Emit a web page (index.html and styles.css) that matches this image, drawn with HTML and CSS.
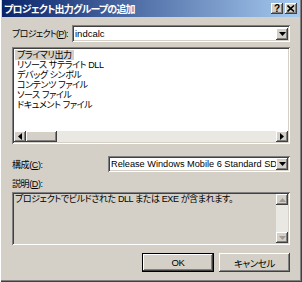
FILE: index.html
```html
<!DOCTYPE html>
<html lang="ja">
<head>
    <meta charset="UTF-8">
    <title>プロジェクト出力グループの追加</title>
    <link rel="stylesheet" href="styles.css">
</head>
<body>

<div class="dialog">
    <div class="titlebar">
        <span class="title">プロジェクト出力グループの追加</span>
        <div class="caption-buttons">
            <span class="cap-btn help">?</span>
            <span class="cap-btn">
                <svg width="8" height="7" viewBox="0 0 8 7"><path d="M0.5 0.5 L7 6.5 M7 0.5 L0.5 6.5" stroke="#000" stroke-width="1.6"/></svg>
            </span>
        </div>
    </div>

    <div class="content">
        <div class="row project-row">
            <span class="label project-label">プロジェクト(<u>P</u>):</span>
            <div class="combo">
                <span class="combo-text">indcalc</span>
                <span class="drop-btn"><svg width="7" height="4" viewBox="0 0 7 4"><path d="M0 0 H7 L3.5 4 Z" fill="#000"/></svg></span>
            </div>
        </div>

        <div class="listbox">
            <ul class="items">
                <li class="selected">プライマリ出力</li>
                <li>リソース サテライト DLL</li>
                <li>デバッグ シンボル</li>
                <li>コンテンツ ファイル</li>
                <li>ソース ファイル</li>
                <li>ドキュメント ファイル</li>
            </ul>
            <div class="hscroll">
                <span class="sb-btn"><svg width="4" height="7" viewBox="0 0 4 7"><path d="M4 0 V7 L0 3.5 Z" fill="#000"/></svg></span>
                <span class="sb-thumb"></span>
                <span class="sb-track"></span>
                <span class="sb-btn"><svg width="4" height="7" viewBox="0 0 4 7"><path d="M0 0 V7 L4 3.5 Z" fill="#000"/></svg></span>
            </div>
        </div>

        <div class="row config-row">
            <span class="label config-label">構成(<u>C</u>):</span>
            <div class="combo">
                <span class="combo-text latin">Release Windows Mobile 6 Standard SDK</span>
                <span class="drop-btn"><svg width="7" height="4" viewBox="0 0 7 4"><path d="M0 0 H7 L3.5 4 Z" fill="#000"/></svg></span>
            </div>
        </div>

        <div class="label desc-label">説明(<u>D</u>):</div>
        <div class="desc">
            <div class="desc-text">プロジェクトでビルドされた DLL または EXE が含まれます。</div>
            <div class="vscroll">
                <span class="sb-btn"><svg width="7" height="4" viewBox="0 0 7 4"><path d="M0 4 H7 L3.5 0 Z" fill="#a09c94"/></svg></span>
                <span class="sb-track"></span>
                <span class="sb-btn"><svg width="7" height="4" viewBox="0 0 7 4"><path d="M0 0 H7 L3.5 4 Z" fill="#a09c94"/></svg></span>
            </div>
        </div>

        <div class="buttons">
            <span class="btn default">OK</span>
            <span class="btn">キャンセル</span>
        </div>
    </div>
</div>

</body>
</html>
```

FILE: styles.css
```css
body {
    margin: 0;
    background: #d4d0c8;
    font-family: "Liberation Sans", "Noto Sans CJK JP", sans-serif;
    font-size: 9px;
    letter-spacing: -0.4px;
    font-feature-settings: "palt" 1;
    color: #000;
}

.dialog {
    width: 302px;
    height: 282px;
    box-sizing: border-box;
    background: #d4d0c8;
    display: flex;
    flex-direction: column;
    padding: 0 2px 2px 2px;
    box-shadow: inset 1px 0 #fff, inset -1px -1px #404040, inset -2px -2px #808080;
}

.titlebar {
    height: 17px;
    flex: none;
    display: flex;
    align-items: center;
    justify-content: space-between;
    background: linear-gradient(to right, #0a246a, #a6caf0);
    padding: 0 3px 0 2px;
}
.title {
    color: #fff;
    font-weight: bold;
    font-size: 10px;
    letter-spacing: -0.8px;
}
.caption-buttons {
    display: flex;
    gap: 2px;
}
.cap-btn {
    width: 12px;
    height: 11px;
    box-sizing: border-box;
    background: #d4d0c8;
    display: flex;
    align-items: center;
    justify-content: center;
    box-shadow: inset -1px -1px #404040, inset 1px 1px #fff, inset -2px -2px #808080;
}
.cap-btn.help {
    font-family: "Liberation Sans", sans-serif;
    font-weight: bold;
    font-size: 10px;
    letter-spacing: 0;
    line-height: 11px;
}

.content {
    flex: 1;
    display: flex;
    flex-direction: column;
    padding: 8px 10px 8px 10px;
}

.row {
    display: flex;
    align-items: center;
}
.label {
    white-space: nowrap;
}
.project-row {
    height: 17px;
}
.project-label {
    width: 60px;
    flex: none;
    letter-spacing: -0.7px;
}
.config-row {
    height: 16px;
    margin-top: 12px;
}
.config-label {
    width: 96px;
    flex: none;
}
.label u {
    text-decoration: underline;
}

.combo {
    flex: 1;
    min-width: 0;
    height: 100%;
    box-sizing: border-box;
    background: #fff;
    display: flex;
    align-items: center;
    padding: 2px 2px 2px 3px;
    box-shadow: inset 1px 1px #808080, inset -1px -1px #fff, inset 2px 2px #404040, inset -2px -2px #d4d0c8;
    overflow: hidden;
}
.combo-text {
    flex: 1;
    min-width: 0;
    white-space: nowrap;
    overflow: hidden;
    font-size: 9.5px;
    letter-spacing: 0;
}
.combo-text.latin {
    font-size: 9.2px;
}
.drop-btn,
.sb-btn {
    width: 12px;
    box-sizing: border-box;
    flex: none;
    background: #d4d0c8;
    display: flex;
    align-items: center;
    justify-content: center;
    box-shadow: inset -1px -1px #404040, inset 1px 1px #fff, inset -2px -2px #808080;
}
.drop-btn {
    height: 12px;
}

.listbox {
    margin-top: 5px;
    height: 97px;
    box-sizing: border-box;
    background: #fff;
    padding: 2px;
    display: flex;
    flex-direction: column;
    box-shadow: inset 1px 1px #808080, inset -1px -1px #fff, inset 2px 2px #404040, inset -2px -2px #d4d0c8;
}
.items {
    flex: 1;
    list-style: none;
    margin: 0;
    padding: 1px 1px 0 1px;
}
.items li {
    height: 10px;
    line-height: 10px;
    padding: 0 2px;
    white-space: nowrap;
    width: max-content;
}
.items li.selected {
    background: #d4d0c8;
}

.hscroll {
    height: 11px;
    display: flex;
}
.hscroll .sb-btn {
    height: 11px;
}
.sb-thumb {
    width: 31px;
    background: #d4d0c8;
    box-shadow: inset -1px -1px #404040, inset 1px 1px #fff, inset -2px -2px #808080;
}
.sb-track {
    flex: 1;
    background: #eae8e3;
}

.desc-label {
    margin-top: 6px;
    height: 12px;
    line-height: 12px;
}
.desc {
    margin-top: 2px;
    height: 53px;
    box-sizing: border-box;
    padding: 2px;
    display: flex;
    box-shadow: inset 1px 1px #808080, inset -1px -1px #fff, inset 2px 2px #404040, inset -2px -2px #d4d0c8;
}
.desc-text {
    flex: 1;
    padding: 0 0 0 1px;
    line-height: 11px;
    white-space: nowrap;
}
.vscroll {
    width: 12px;
    display: flex;
    flex-direction: column;
}
.vscroll .sb-btn {
    height: 11px;
}

.buttons {
    margin-top: 8px;
    display: flex;
    justify-content: flex-end;
    gap: 5px;
}
.btn {
    width: 71px;
    height: 19px;
    box-sizing: border-box;
    display: flex;
    align-items: center;
    justify-content: center;
    background: #d4d0c8;
    font-size: 9.5px;
    box-shadow: inset -1px -1px #404040, inset 1px 1px #fff, inset -2px -2px #808080;
}
.btn.default {
    width: 72px;
    box-shadow: inset 0 0 0 1px #000, inset -2px -2px #404040, inset 2px 2px #fff, inset -3px -3px #808080;
}
```
